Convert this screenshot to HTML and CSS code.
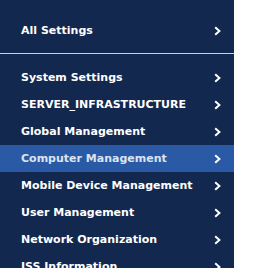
FILE: index.html
```html
<!DOCTYPE html>
<html>
<head>
<meta charset="utf-8">
<link rel="stylesheet" href="styles.css">
</head>
<body>
<nav class="panel">
  <div class="header item">
    <span class="label">All Settings</span>
    <svg class="chev" width="7" height="10" viewBox="0 0 7 10"><path d="M1.2 1.2 L5.4 5 L1.2 8.8" fill="none" stroke="currentColor" stroke-width="2"/></svg>
  </div>
  <ul class="list">
    <li class="item"><span class="label">System Settings</span><svg class="chev" width="7" height="10" viewBox="0 0 7 10"><path d="M1.2 1.2 L5.4 5 L1.2 8.8" fill="none" stroke="currentColor" stroke-width="2"/></svg></li>
    <li class="item"><span class="label">SERVER_INFRASTRUCTURE</span><svg class="chev" width="7" height="10" viewBox="0 0 7 10"><path d="M1.2 1.2 L5.4 5 L1.2 8.8" fill="none" stroke="currentColor" stroke-width="2"/></svg></li>
    <li class="item"><span class="label">Global Management</span><svg class="chev" width="7" height="10" viewBox="0 0 7 10"><path d="M1.2 1.2 L5.4 5 L1.2 8.8" fill="none" stroke="currentColor" stroke-width="2"/></svg></li>
    <li class="item active"><span class="label">Computer Management</span><svg class="chev" width="7" height="10" viewBox="0 0 7 10"><path d="M1.2 1.2 L5.4 5 L1.2 8.8" fill="none" stroke="currentColor" stroke-width="2"/></svg></li>
    <li class="item"><span class="label">Mobile Device Management</span><svg class="chev" width="7" height="10" viewBox="0 0 7 10"><path d="M1.2 1.2 L5.4 5 L1.2 8.8" fill="none" stroke="currentColor" stroke-width="2"/></svg></li>
    <li class="item"><span class="label">User Management</span><svg class="chev" width="7" height="10" viewBox="0 0 7 10"><path d="M1.2 1.2 L5.4 5 L1.2 8.8" fill="none" stroke="currentColor" stroke-width="2"/></svg></li>
    <li class="item"><span class="label">Network Organization</span><svg class="chev" width="7" height="10" viewBox="0 0 7 10"><path d="M1.2 1.2 L5.4 5 L1.2 8.8" fill="none" stroke="currentColor" stroke-width="2"/></svg></li>
    <li class="item"><span class="label">JSS Information</span><svg class="chev" width="7" height="10" viewBox="0 0 7 10"><path d="M1.2 1.2 L5.4 5 L1.2 8.8" fill="none" stroke="currentColor" stroke-width="2"/></svg></li>
  </ul>
</nav>
</body>
</html>
```

FILE: styles.css
```css
html, body {
  margin: 0;
  padding: 0;
  background: #ffffff;
  height: 268px;
  overflow: hidden;
}
.panel {
  width: 234px;
  height: 268px;
  background: #13284e;
  font-family: "DejaVu Sans", sans-serif;
  font-weight: bold;
  font-size: 11px;
  color: #ffffff;
  overflow: hidden;
}
.item {
  display: flex;
  align-items: center;
  justify-content: space-between;
  height: 27px;
  padding: 0 13px 0 21px;
}
.header {
  padding-top: 17px;
  padding-bottom: 9px;
  border-bottom: 1px solid #c9d0dc;
}
.list {
  list-style: none;
  margin: 0;
  padding: 10px 0 0 0;
}
.active {
  background: #2a5aa5;
  color: #dbe4f1;
}
.active .chev {
  color: #ffffff;
}
.chev {
  display: block;
  flex: none;
}
```
